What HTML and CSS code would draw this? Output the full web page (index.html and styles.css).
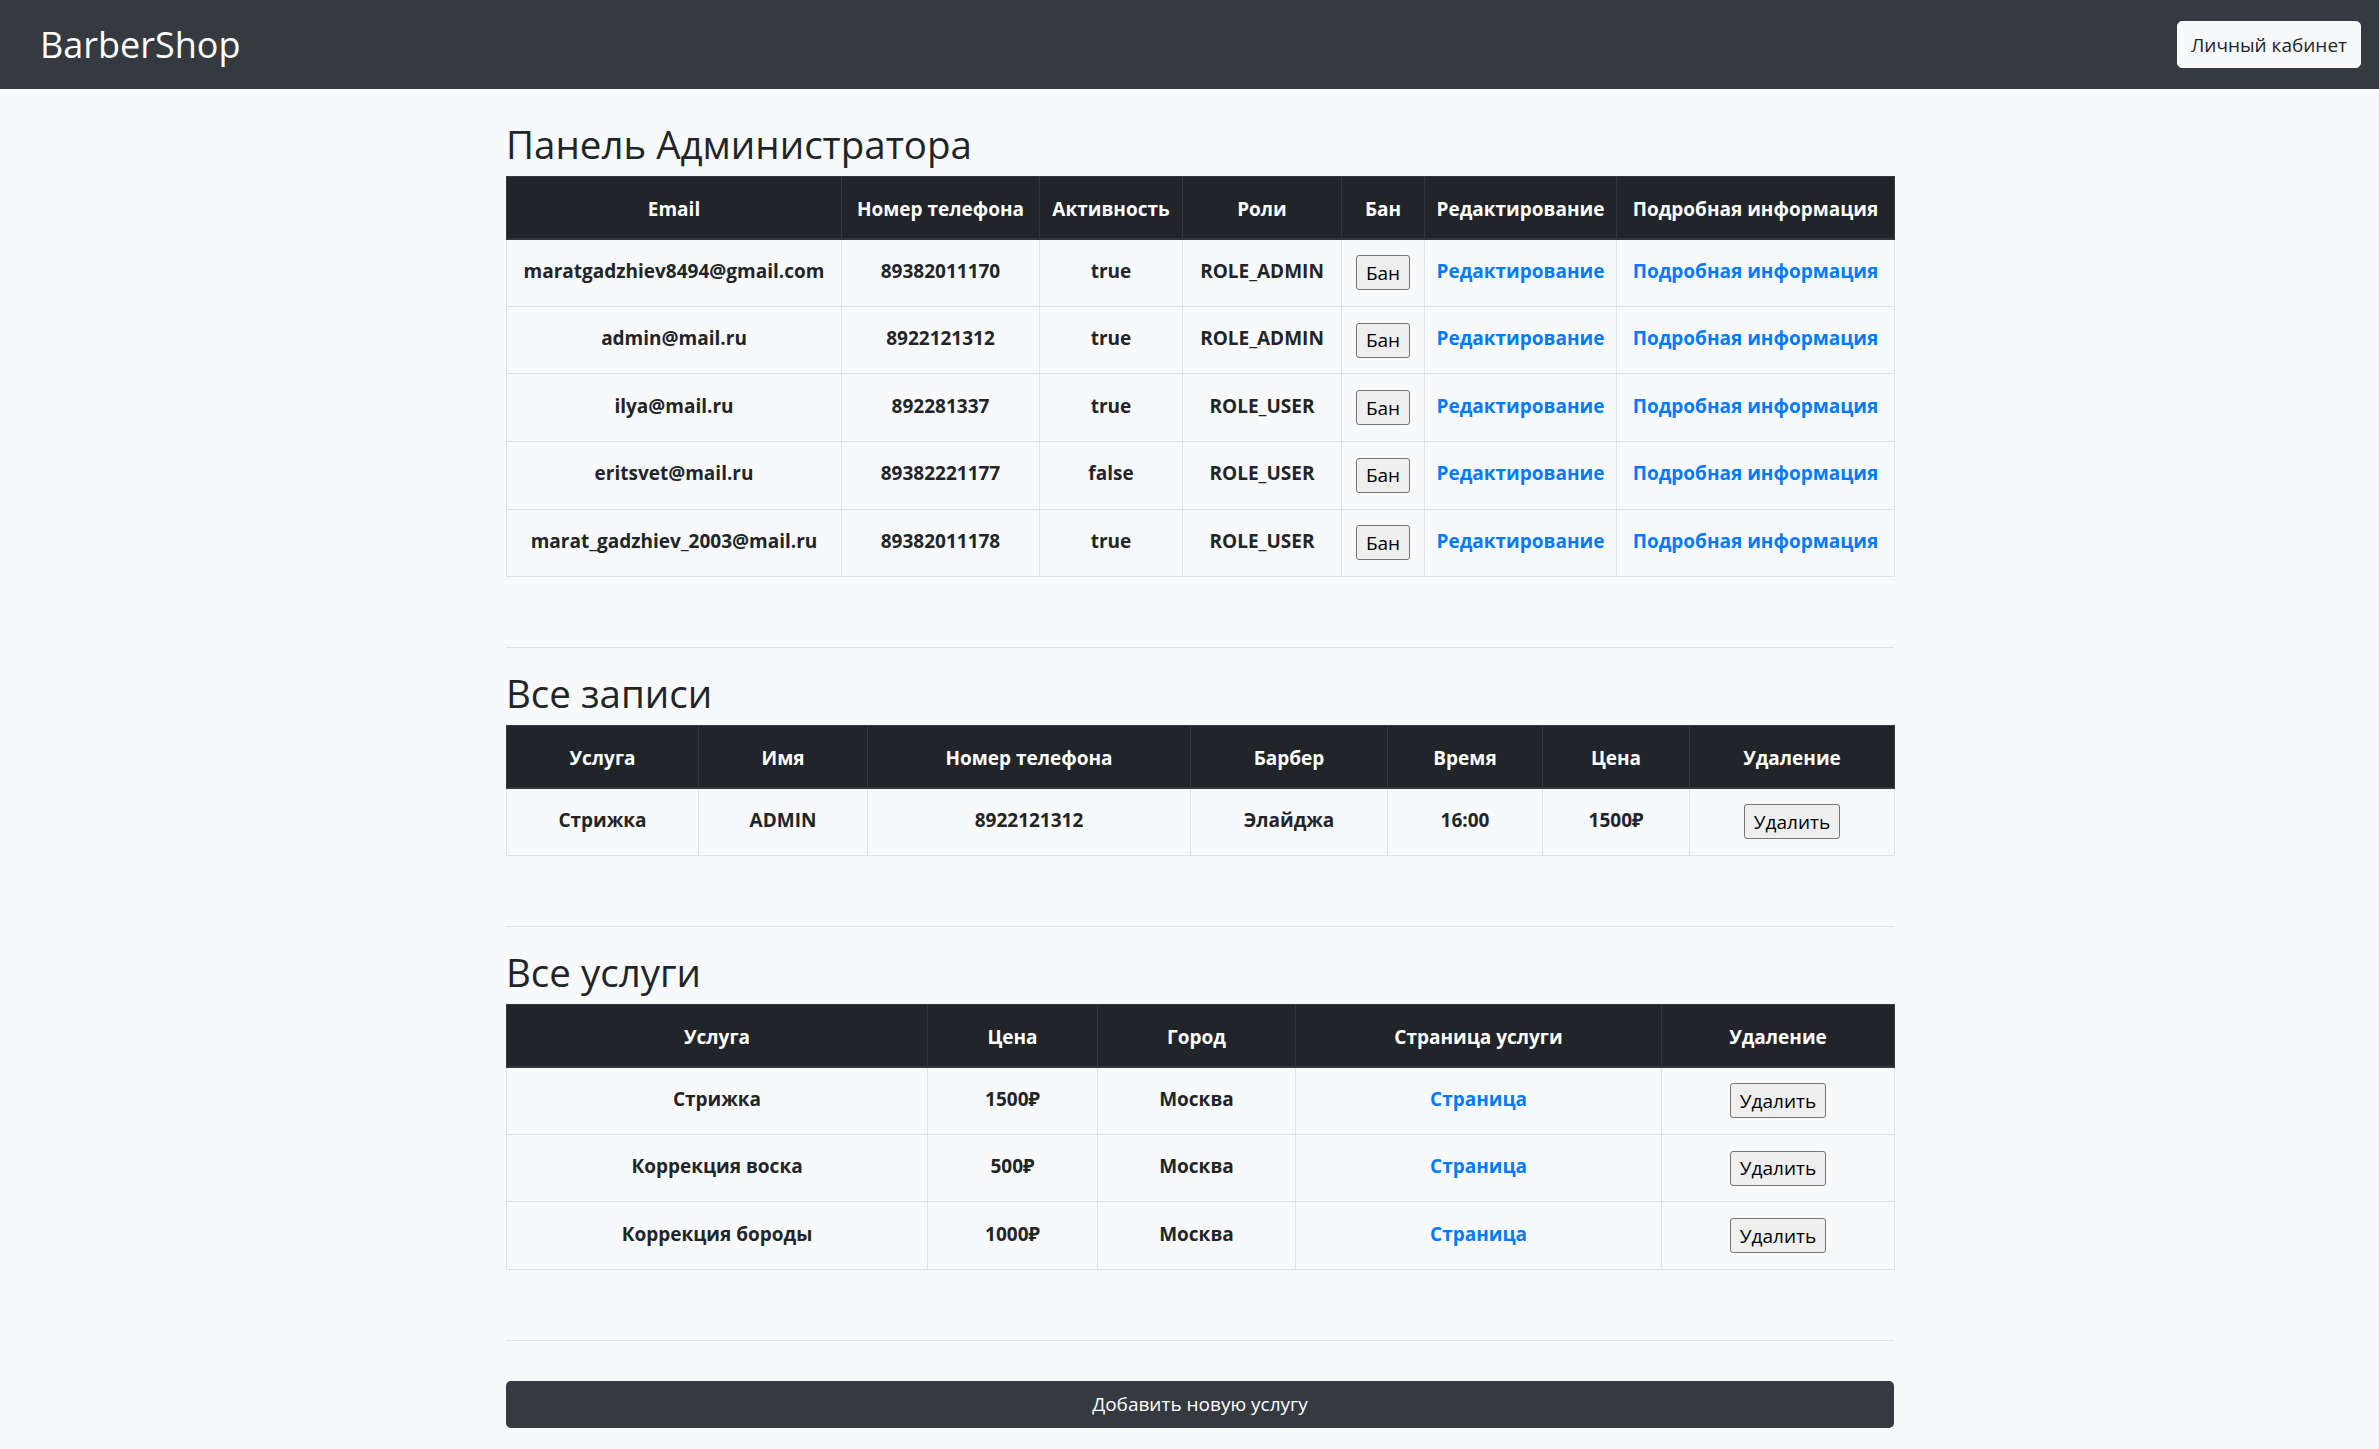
FILE: index.html
```html
<!DOCTYPE html>
<html lang="ru">
<head>
<meta charset="utf-8">
<title>BarberShop</title>
<link rel="stylesheet" href="styles.css">
</head>
<body>
<header class="navbar">
  <a class="brand" href="#">BarberShop</a>
  <button class="btn-light">Личный кабинет</button>
</header>
<main class="container">
  <h2 class="title title-first">Панель Администратора</h2>
  <table class="table t-users">
    <colgroup>
      <col class="c1"><col class="c2"><col class="c3"><col class="c4"><col class="c5"><col class="c6"><col class="c7">
    </colgroup>
    <thead>
      <tr><th>Email</th><th>Номер телефона</th><th>Активность</th><th>Роли</th><th>Бан</th><th>Редактирование</th><th>Подробная информация</th></tr>
    </thead>
    <tbody>
      <tr><td>maratgadzhiev8494@gmail.com</td><td>89382011170</td><td>true</td><td>ROLE_ADMIN</td><td><button class="native">Бан</button></td><td><a href="#">Редактирование</a></td><td><a href="#">Подробная информация</a></td></tr>
      <tr><td>admin@mail.ru</td><td>8922121312</td><td>true</td><td>ROLE_ADMIN</td><td><button class="native">Бан</button></td><td><a href="#">Редактирование</a></td><td><a href="#">Подробная информация</a></td></tr>
      <tr><td>ilya@mail.ru</td><td>892281337</td><td>true</td><td>ROLE_USER</td><td><button class="native">Бан</button></td><td><a href="#">Редактирование</a></td><td><a href="#">Подробная информация</a></td></tr>
      <tr><td>eritsvet@mail.ru</td><td>89382221177</td><td>false</td><td>ROLE_USER</td><td><button class="native">Бан</button></td><td><a href="#">Редактирование</a></td><td><a href="#">Подробная информация</a></td></tr>
      <tr><td>marat_gadzhiev_2003@mail.ru</td><td>89382011178</td><td>true</td><td>ROLE_USER</td><td><button class="native">Бан</button></td><td><a href="#">Редактирование</a></td><td><a href="#">Подробная информация</a></td></tr>
    </tbody>
  </table>
  <hr class="sep">
  <h2 class="title">Все записи</h2>
  <table class="table t-records">
    <colgroup>
      <col class="c1"><col class="c2"><col class="c3"><col class="c4"><col class="c5"><col class="c6"><col class="c7">
    </colgroup>
    <thead>
      <tr><th>Услуга</th><th>Имя</th><th>Номер телефона</th><th>Барбер</th><th>Время</th><th>Цена</th><th>Удаление</th></tr>
    </thead>
    <tbody>
      <tr><td>Стрижка</td><td>ADMIN</td><td>8922121312</td><td>Элайджа</td><td>16:00</td><td>1500₽</td><td><button class="native">Удалить</button></td></tr>
    </tbody>
  </table>
  <hr class="sep">
  <h2 class="title">Все услуги</h2>
  <table class="table t-services">
    <colgroup>
      <col class="c1"><col class="c2"><col class="c3"><col class="c4"><col class="c5">
    </colgroup>
    <thead>
      <tr><th>Услуга</th><th>Цена</th><th>Город</th><th>Страница услуги</th><th>Удаление</th></tr>
    </thead>
    <tbody>
      <tr><td>Стрижка</td><td>1500₽</td><td>Москва</td><td><a href="#">Страница</a></td><td><button class="native">Удалить</button></td></tr>
      <tr><td>Коррекция воска</td><td>500₽</td><td>Москва</td><td><a href="#">Страница</a></td><td><button class="native">Удалить</button></td></tr>
      <tr><td>Коррекция бороды</td><td>1000₽</td><td>Москва</td><td><a href="#">Страница</a></td><td><button class="native">Удалить</button></td></tr>
    </tbody>
  </table>
  <hr class="sep sep-last">
  <button class="btn-dark">Добавить новую услугу</button>
</main>
</body>
</html>
```

FILE: styles.css
```css
* { box-sizing: border-box; }

html, body {
  margin: 0;
  padding: 0;
}

body {
  background: #f8f9fa;
  color: #212529;
  font-family: "Open Sans", "Noto Sans", sans-serif;
  font-size: 19px;
}

.navbar {
  height: 89px;
  background: #343a40;
  display: flex;
  align-items: center;
  justify-content: space-between;
  padding: 0 18px 0 40px;
}

.brand {
  color: #fff;
  text-decoration: none;
  font-size: 36px;
  line-height: 1;
}

.btn-light {
  height: 47px;
  width: 184px;
  padding: 0;
  border: 1px solid #f8f9fa;
  border-radius: 5px;
  background: #f8f9fa;
  color: #212529;
  font-family: inherit;
  font-size: 19px;
}

.container {
  width: 1409px;
  margin: 0 auto;
  padding-left: 21px;
  padding-bottom: 40px;
}

.title {
  margin: 22px 0 9px 0;
  font-size: 38.5px;
  font-weight: 400;
  line-height: 1.2;
}

.title-first {
  margin-top: 32px;
}

.table {
  width: 1388px;
  table-layout: fixed;
  border-collapse: collapse;
  text-align: center;
  font-weight: 700;
}

.table th {
  background: #212529;
  color: #fff;
  border: 1px solid #32383e;
  border-bottom: 2px solid #32383e;
  padding: 3px 6px 0 6px;
  vertical-align: middle;
}

.table thead tr { height: 62px; }
.table tbody tr { height: 67.6px; }

.table td {
  border: 1px solid #dee2e6;
  padding: 0 6px 4px 6px;
  vertical-align: middle;
}

.table a {
  color: #007bff;
  text-decoration: none;
}

.t-users .c1 { width: 335px; }
.t-users .c2 { width: 198px; }
.t-users .c3 { width: 143px; }
.t-users .c4 { width: 159px; }
.t-users .c5 { width: 83px; }
.t-users .c6 { width: 192px; }
.t-users .c7 { width: 278px; }

.t-records .c1 { width: 192px; }
.t-records .c2 { width: 169px; }
.t-records .c3 { width: 323px; }
.t-records .c4 { width: 197px; }
.t-records .c5 { width: 155px; }
.t-records .c6 { width: 147px; }
.t-records .c7 { width: 205px; }

.t-services .c1 { width: 421px; }
.t-services .c2 { width: 170px; }
.t-services .c3 { width: 198px; }
.t-services .c4 { width: 366px; }
.t-services .c5 { width: 233px; }

.native {
  height: 35px;
  padding: 0 9px;
  border: 1px solid #767676;
  border-radius: 3px;
  background: #efefef;
  color: #000;
  font-family: inherit;
  font-size: 19px;
  font-weight: 400;
  vertical-align: middle;
  position: relative;
  top: 2px;
}

.sep {
  border: 0;
  border-top: 1px solid #dfe0e1;
  margin: 70px 0 0 0;
  width: 1388px;
}

.sep-last {
  margin-bottom: 40px;
}

.btn-dark {
  display: block;
  width: 1388px;
  height: 47px;
  border: 0;
  border-radius: 5px;
  background: #343a40;
  color: #fff;
  font-family: inherit;
  font-size: 19px;
}
```
